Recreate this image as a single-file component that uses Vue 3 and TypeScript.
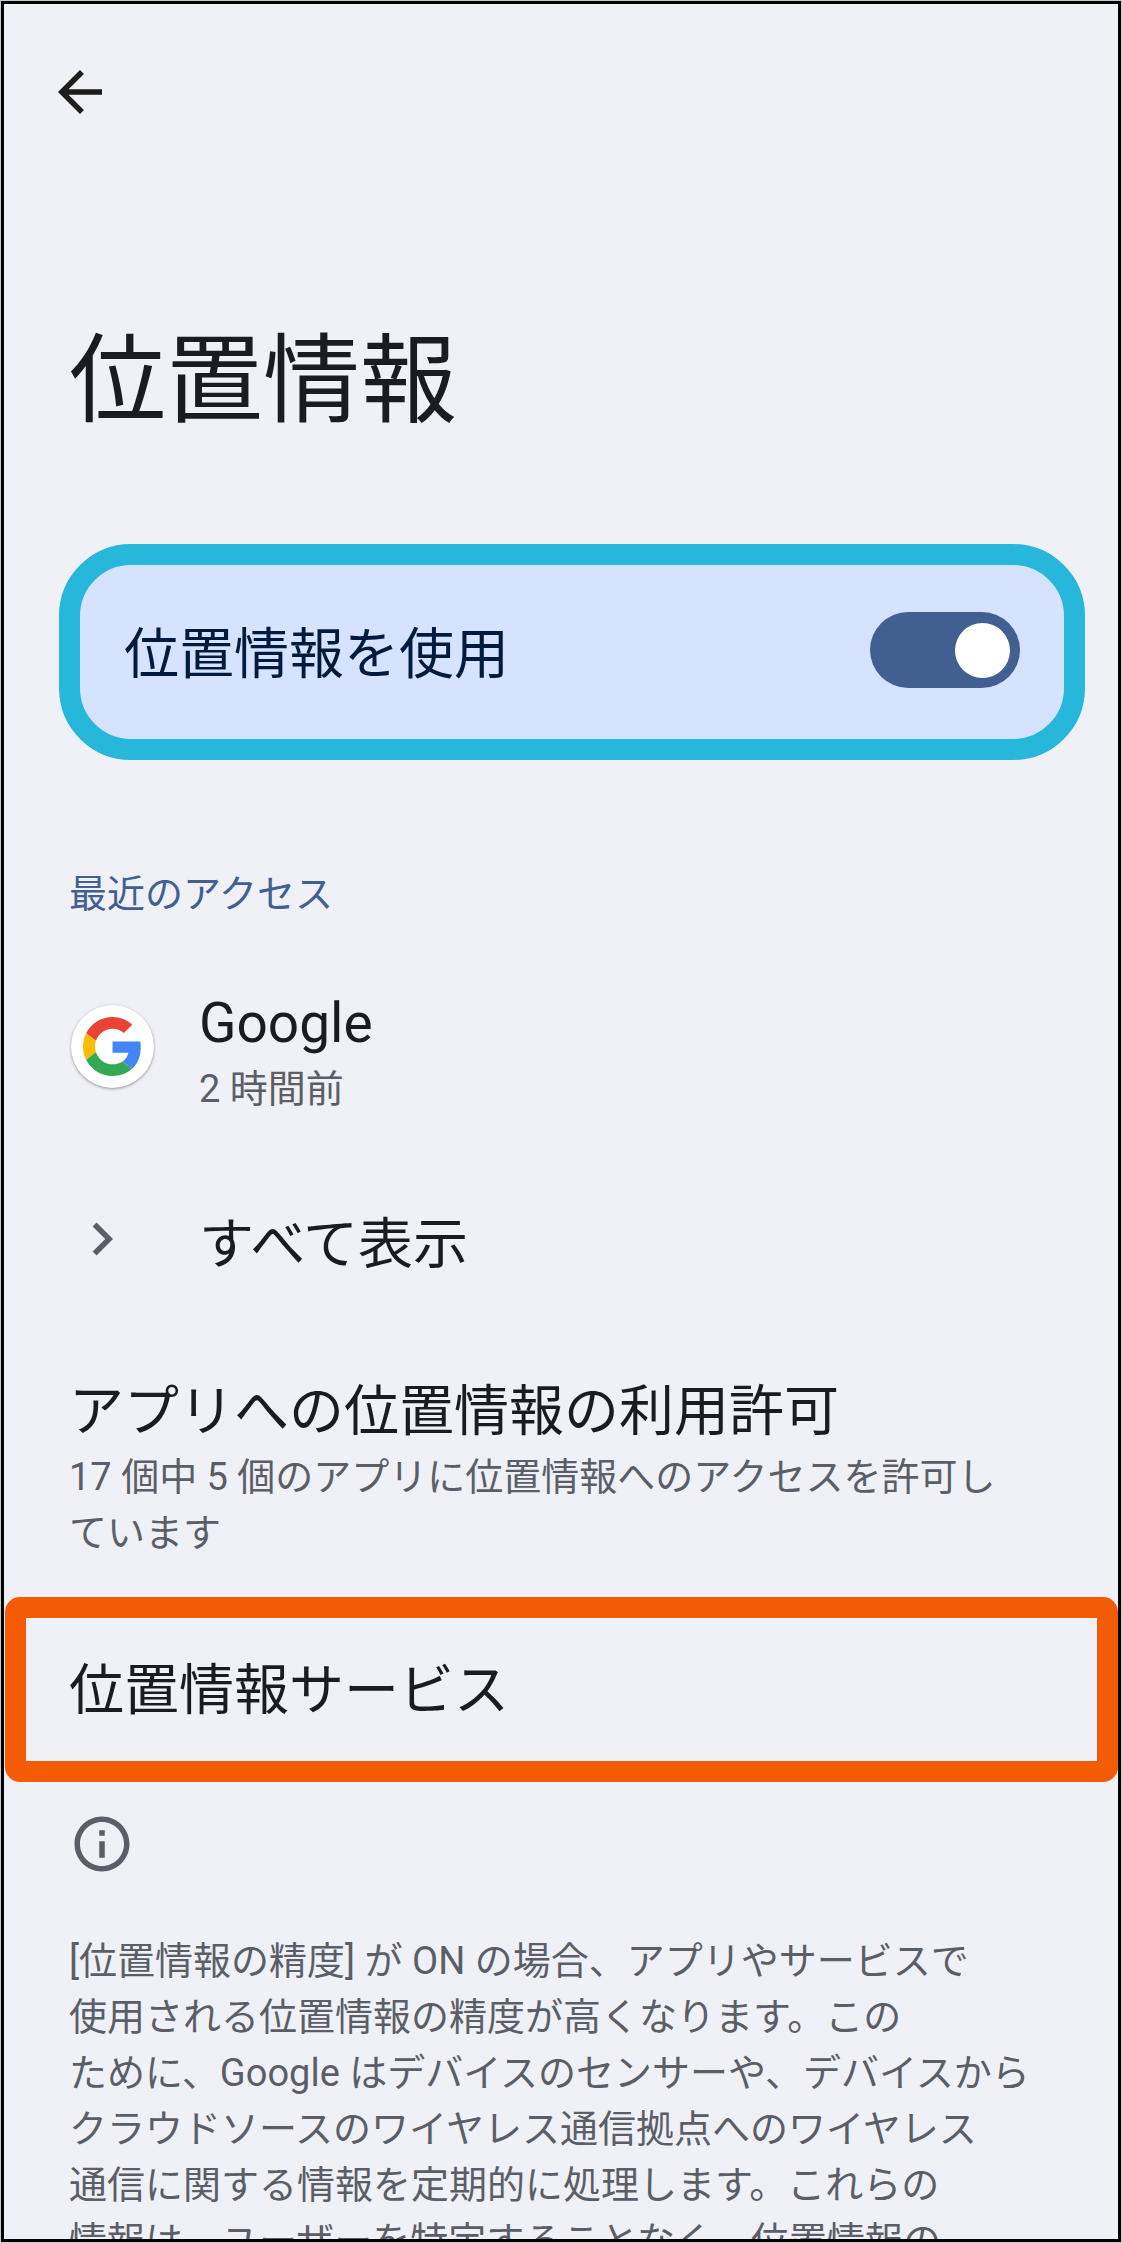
<script setup lang="ts">
import { ref } from 'vue'

const useLocation = ref<boolean>(true)

const footerLines: string[] = [
  '[位置情報の精度] が ON の場合、アプリやサービスで',
  '使用される位置情報の精度が高くなります。この',
  'ために、Google はデバイスのセンサーや、デバイスから',
  'クラウドソースのワイヤレス通信拠点へのワイヤレス',
  '通信に関する情報を定期的に処理します。これらの',
  '情報は、ユーザーを特定することなく、位置情報の',
]
</script>

<template>
  <div class="frame">
    <main class="screen">
      <header class="top-bar">
        <button class="back" type="button" aria-label="戻る">
          <svg viewBox="0 0 24 24" aria-hidden="true">
            <path d="M20 11H7.83l5.59-5.59L12 4l-8 8 8 8 1.41-1.41L7.83 13H20z" />
          </svg>
        </button>
      </header>

      <h1 class="title">位置情報</h1>

      <label class="main-switch">
        <span>位置情報を使用</span>
        <input v-model="useLocation" class="switch" type="checkbox" role="switch" />
      </label>

      <h2 class="section">最近のアクセス</h2>

      <a class="row app" href="#google">
        <span class="lead">
          <span class="app-icon">
            <svg viewBox="0 0 48 48" aria-hidden="true">
              <path fill="#ea4335" d="M24 9.5c3.54 0 6.71 1.22 9.21 3.6l6.85-6.85C35.9 2.38 30.47 0 24 0 14.62 0 6.51 5.38 2.56 13.22l7.98 6.19C12.43 13.72 17.74 9.5 24 9.5z" />
              <path fill="#4285f4" d="M46.98 24.55c0-1.57-.15-3.09-.38-4.55H24v9.02h12.94c-.58 2.96-2.26 5.48-4.78 7.18l7.73 6c4.51-4.18 7.09-10.36 7.09-17.65z" />
              <path fill="#fbbc05" d="M10.53 28.59c-.48-1.45-.76-2.99-.76-4.59s.27-3.14.76-4.59l-7.98-6.19C.92 16.46 0 20.12 0 24c0 3.88.92 7.54 2.56 10.78l7.97-6.19z" />
              <path fill="#34a853" d="M24 48c6.48 0 11.93-2.13 15.89-5.81l-7.73-6c-2.15 1.45-4.92 2.3-8.16 2.3-6.26 0-11.57-4.22-13.47-9.91l-7.98 6.19C6.51 42.62 14.62 48 24 48z" />
            </svg>
          </span>
        </span>
        <span class="text">
          <span class="label">Google</span>
          <span class="note">2 時間前</span>
        </span>
      </a>

      <a class="row all" href="#all">
        <span class="lead">
          <svg class="chevron" viewBox="0 0 24 24" aria-hidden="true">
            <path d="M10 6 8.59 7.41 13.17 12l-4.58 4.59L10 18l6-6z" />
          </svg>
        </span>
        <span class="label">すべて表示</span>
      </a>

      <a class="row permission" href="#permissions">
        <span class="text">
          <span class="label">アプリへの位置情報の利用許可</span>
          <span class="note">17 個中 5 個のアプリに位置情報へのアクセスを許可し<br />ています</span>
        </span>
      </a>

      <a class="services" href="#services">
        <span class="label">位置情報サービス</span>
      </a>

      <footer class="info">
        <svg class="info-icon" viewBox="0 0 24 24" aria-hidden="true">
          <path d="M11 7h2v2h-2zm0 4h2v6h-2zm1-9C6.48 2 2 6.48 2 12s4.48 10 10 10 10-4.48 10-10S17.52 2 12 2zm0 18c-4.41 0-8-3.59-8-8s3.59-8 8-8 8 3.59 8 8-3.59 8-8 8z" />
        </svg>
        <p class="note">
          <span v-for="line in footerLines" :key="line" class="line">{{ line }}</span>
        </p>
      </footer>
    </main>
  </div>
</template>

<style>
body {
  margin: 0;
  background: #c9cccb;
}
</style>

<style scoped>
.frame {
  box-sizing: border-box;
  height: 100vh;
  padding: 1px;
}

.screen {
  box-sizing: border-box;
  height: 100%;
  overflow: hidden;
  border: 3px solid #000;
  background: #f0f1f7;
  color: #191c20;
  font-family: Roboto, 'Noto Sans CJK JP', sans-serif;
  font-weight: 400;
}

.top-bar {
  padding: 55px 43px 0;
}

.back {
  display: block;
  width: 66px;
  height: 66px;
  padding: 0;
  border: 0;
  background: none;
  color: #1c1c1a;
}

svg {
  display: block;
  fill: currentColor;
}

.title {
  margin: 186px 0 0;
  padding: 0 65px;
  font-size: 97px;
  font-weight: 400;
  line-height: 140px;
}

.main-switch {
  display: flex;
  align-items: flex-start;
  justify-content: space-between;
  box-sizing: border-box;
  height: 216px;
  margin: 93px 33px 0 55px;
  padding: 47px 44px 0;
  border: 21px solid #27b7da;
  border-radius: 72px;
  background: #d6e3ff;
  color: #001b3e;
  font-size: 55px;
  line-height: 84px;
}

.switch {
  appearance: none;
  display: flex;
  align-items: center;
  box-sizing: border-box;
  width: 150px;
  height: 76px;
  margin: 0;
  padding: 0 10px;
  border-radius: 38px;
  background: #8b919e;
}

.switch::before {
  content: '';
  width: 55px;
  height: 55px;
  border-radius: 50%;
  background: #fff;
}

.switch:checked {
  justify-content: flex-end;
  background: #415f91;
}

.section {
  margin: 106px 0 0;
  padding: 0 65px;
  color: #415f91;
  font-size: 38px;
  font-weight: 400;
  line-height: 56px;
}

.row {
  display: flex;
  align-items: flex-start;
  padding: 0 65px;
  color: inherit;
  text-decoration: none;
}

.app {
  margin-top: 63px;
}

.app .lead {
  padding: 20px 0 0 2px;
}

.all {
  margin-top: 89px;
}

.permission {
  margin-top: 91px;
}

.lead {
  flex: none;
  box-sizing: border-box;
  width: 130px;
}

.text {
  display: flex;
  flex-direction: column;
}

.label {
  font-size: 55px;
  line-height: 76px;
}

.note {
  color: #5b5e66;
  font-size: 38px;
  line-height: 56px;
}

.app-icon {
  display: grid;
  place-items: center;
  width: 83px;
  height: 83px;
  border-radius: 50%;
  background: #fff;
  box-shadow: 0 1px 3px rgb(0 0 0 / 40%);
}

.app-icon svg {
  width: 59px;
  height: 59px;
}

.chevron {
  width: 66px;
  height: 66px;
  color: #5b5e66;
}

.services {
  display: flex;
  align-items: center;
  box-sizing: border-box;
  height: 185px;
  margin: 36px 0 0 1px;
  padding: 0 43px;
  border: 21px solid #f35c05;
  border-radius: 15px;
  color: inherit;
  text-decoration: none;
}

.info {
  padding: 29px 65px 0;
}

.info-icon {
  width: 66px;
  height: 66px;
  color: #5b5e66;
}

.info .note {
  margin: 56px 0 0;
}

.line {
  display: block;
  white-space: nowrap;
}
</style>
